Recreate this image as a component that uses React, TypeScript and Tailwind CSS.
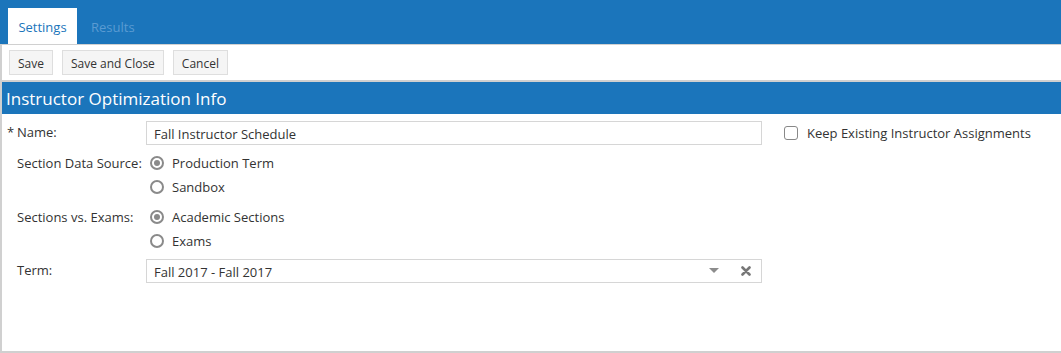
import React from 'react';

const BLUE = 'bg-[#1b75bb]';

function Radio({ checked, label }: { checked?: boolean; label: string }) {
  return (
    <label className="flex items-center h-[24px] gap-[8px] pl-[4px]">
      <span className="w-[14px] h-[14px] rounded-full border-2 border-[#8a8a8a] flex items-center justify-center">
        {checked && <span className="w-[6px] h-[6px] rounded-full bg-[#8a8a8a]" />}
      </span>
      <span className="pt-[2px]">{label}</span>
    </label>
  );
}

function ToolButton({ children }: { children: React.ReactNode }) {
  return (
    <button className="h-[25px] px-[8px] pt-[2px] bg-[#f5f5f5] border border-[#dedede] text-[12px] text-[#333] leading-none">
      {children}
    </button>
  );
}

export default function App() {
  return (
    <div
      className="w-full h-[353px] flex flex-col bg-white text-[13px] text-[#333]"
      style={{ fontFamily: '"Open Sans", "Liberation Sans", sans-serif' }}
    >
      <div className={`h-[44px] shrink-0 ${BLUE} flex items-end pl-[8px]`}>
        <div className="h-[36px] w-[69px] pt-[3px] bg-white text-[#1b75bb] flex items-center justify-center">Settings</div>
        <div className="h-[36px] px-[14px] pt-[3px] text-[#5a9bd2] flex items-center">Results</div>
      </div>

      <div className="flex-1 flex flex-col border-l-2 border-b-2 border-t border-[#d0d0d0]">
        <div className="h-[37px] shrink-0 flex items-center gap-[9px] pl-[7px] border-b-2 border-[#d0d0d0]">
          <ToolButton>Save</ToolButton>
          <ToolButton>Save and Close</ToolButton>
          <ToolButton>Cancel</ToolButton>
        </div>

        <div className={`h-[32px] shrink-0 ${BLUE} text-white text-[17px] pl-[4px] pt-[2px] flex items-center`}>
          Instructor Optimization Info
        </div>

        <div className="flex flex-col gap-[6px] pt-[7px]">
          <div className="flex items-center h-[24px]">
            <div className="w-[144px] pl-[5px] flex items-start">
              <span className="w-[10px]">*</span>
              <span>Name:</span>
            </div>
            <div className="w-[616px] h-[24px] border border-[#d6d6d6] px-[7px] pt-[3px] flex items-center">Fall Instructor Schedule</div>
            <label className="flex items-center ml-[22px] gap-[9px]">
              <span className="w-[14px] h-[14px] rounded-[3px] border border-[#888]" />
              <span className="pt-[1px]">Keep Existing Instructor Assignments</span>
            </label>
          </div>

          <div className="flex">
            <div className="w-[144px] pl-[15px] h-[24px] pt-[2px] flex items-center">Section Data Source:</div>
            <div className="flex flex-col">
              <Radio checked label="Production Term" />
              <Radio label="Sandbox" />
            </div>
          </div>

          <div className="flex">
            <div className="w-[144px] pl-[15px] h-[24px] pt-[2px] flex items-center">Sections vs. Exams:</div>
            <div className="flex flex-col">
              <Radio checked label="Academic Sections" />
              <Radio label="Exams" />
            </div>
          </div>

          <div className="flex items-center">
            <div className="w-[144px] pl-[15px] h-[24px] flex items-center">Term:</div>
            <div className="w-[616px] h-[24px] border border-[#d6d6d6] pl-[7px] pr-[10px] flex items-center">
              <span className="flex-1 pt-[4px]">Fall 2017 - Fall 2017</span>
              <svg width="10" height="6" viewBox="0 0 10 6" className="mr-[22px]">
                <path d="M0 0 H10 L5 5 Z" fill="#8c8c8c" />
              </svg>
              <svg width="10" height="10" viewBox="0 0 10 10">
                <path d="M1.5 1.5 L8.5 8.5 M8.5 1.5 L1.5 8.5" stroke="#777" strokeWidth="2.6" strokeLinecap="round" />
              </svg>
            </div>
          </div>
        </div>
      </div>
    </div>
  );
}
